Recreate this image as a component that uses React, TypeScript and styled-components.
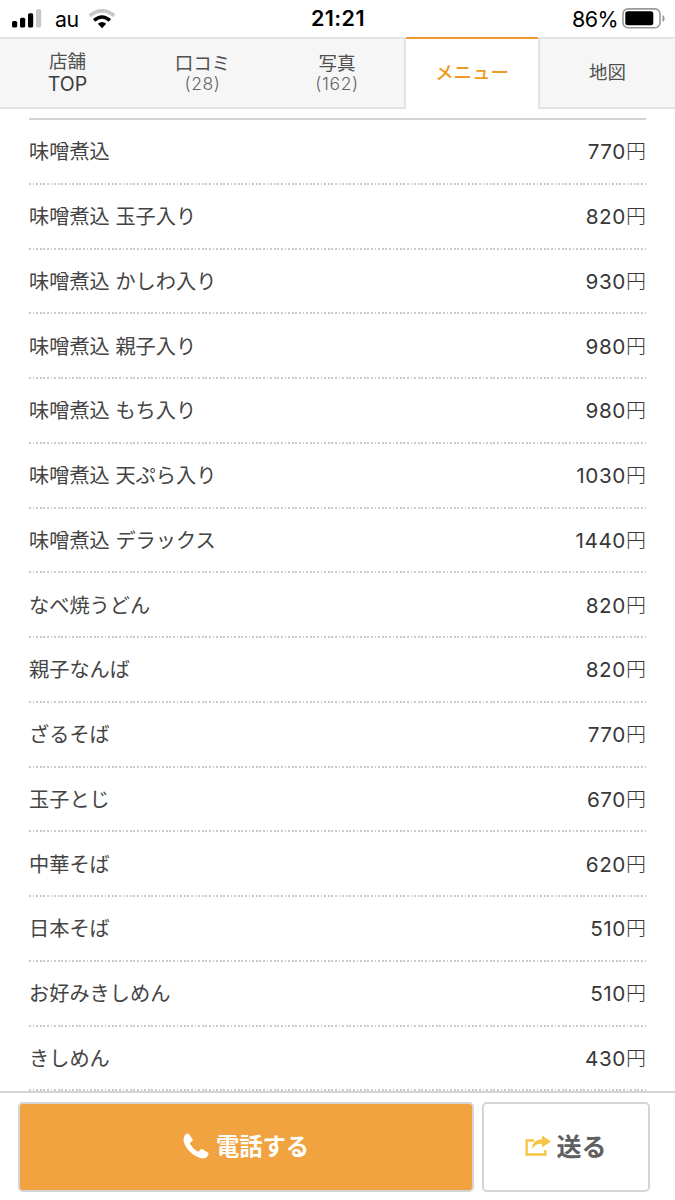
import React from 'react';
import styled, { createGlobalStyle } from 'styled-components';

const GlobalStyle = createGlobalStyle`
  * { box-sizing: border-box; }
  body {
    margin: 0;
    background: #fff;
    color: #444;
    font-family: Inter, "Noto Sans CJK JP", sans-serif;
    font-weight: 400;
  }
`;

const Screen = styled.div`
  width: 675px;
  height: 1200px;
  overflow: hidden;
  display: flex;
  flex-direction: column;
`;

const StatusBar = styled.header`
  height: 37px;
  flex: none;
  display: grid;
  grid-template-columns: 1fr auto 1fr;
  align-items: center;
  padding: 0 10px 0 12px;
  color: #000;
  font-size: 22px;
  font-weight: 400;
  line-height: 34px;
`;

const StatusGroup = styled.div<{ $end?: boolean }>`
  display: flex;
  align-items: center;
  height: 36px;
  justify-content: ${(p) => (p.$end ? 'flex-end' : 'flex-start')};
`;

const Carrier = styled.span`
  margin: 0 9px 0 13px;
  font-size: 21.3px;
  letter-spacing: -0.4px;
`;

const Clock = styled.span`
  font-weight: 600;
  font-size: 21.5px;
  letter-spacing: 0.4px;
  margin-right: 1px;
  padding-bottom: 1px;
`;

const Percent = styled.span`
  margin-right: 4px;
  font-size: 21.5px;
  letter-spacing: -0.6px;
`;

const Tabs = styled.nav`
  flex: none;
  height: 72px;
  display: grid;
  grid-template-columns: 406px 132px 137px;
`;

const TabGroup = styled.div`
  display: grid;
  grid-template-columns: 135px 135px 134px;
  border-right: 2px solid #e4e4e4;
`;

const Tab = styled.div<{ $active?: boolean; $divided?: boolean; $stacked?: boolean }>`
  display: flex;
  flex-direction: column;
  align-items: center;
  justify-content: center;
  padding-bottom: ${(p) => (p.$stacked ? '0' : '2px')};
  font-size: 18.5px;
  line-height: 22px;
  color: ${(p) => (p.$active ? '#f09a26' : '#505050')};
  font-weight: ${(p) => (p.$active ? 500 : 400)};
  background: ${(p) => (p.$active ? '#fff' : '#f6f6f6')};
  border-top: 2px solid ${(p) => (p.$active ? '#eb9a35' : '#e4e4e4')};
  border-bottom: 2px solid ${(p) => (p.$active ? '#fff' : '#e4e4e4')};
  ${(p) => p.$divided && 'border-left: 2px solid #e4e4e4;'}
`;

const TopWord = styled.span`
  font-size: 19.5px;
  line-height: 24px;
  color: #3c3c3c;
`;

const Count = styled.span`
  font-size: 17.5px;
  line-height: 20px;
  letter-spacing: 0.6px;
  font-weight: 350;
  color: #666;
`;

const Menu = styled.ul`
  flex: 1;
  min-height: 0;
  overflow: hidden;
  list-style: none;
  margin: 9px 29px 0;
  padding: 0;
  border-top: 2px solid #d2d2d2;
`;

const MenuRow = styled.li`
  height: 64.76px;
  display: flex;
  justify-content: space-between;
  align-items: center;
  font-size: 20.2px;
  line-height: 30px;
  background: repeating-linear-gradient(90deg, #cacaca 0 1.8px, #fff 1.8px 3.6px)
    0 100% / 100% 2px no-repeat;
`;

const Price = styled.span`
  display: flex;
  font-size: 20.7px;
  letter-spacing: 0.6px;
  color: #383838;
`;

const Yen = styled.span`
  font-size: 20px;
  letter-spacing: 0;
  font-weight: 300;
`;

const ActionBar = styled.footer`
  flex: none;
  height: 109px;
  border-top: 2px solid #d4d4d4;
  padding: 9px 25px 8px 18px;
  display: grid;
  grid-template-columns: 456px 168px;
  column-gap: 8px;
`;

const ActionButton = styled.button<{ $primary?: boolean }>`
  display: flex;
  align-items: center;
  justify-content: center;
  border: 2px solid #d5d5d5;
  border-radius: 5px;
  padding: 0;
  font-family: inherit;
  font-weight: 700;
  font-size: ${(p) => (p.$primary ? '23.3px' : '25px')};
  line-height: 32px;
  color: ${(p) => (p.$primary ? '#fff' : '#606060')};
  background: ${(p) => (p.$primary ? '#f0a33e' : '#fff')};
  gap: ${(p) => (p.$primary ? '7px' : '5px')};

  svg {
    margin-bottom: 3px;
  }
`;

const SignalIcon = () => (
  <svg width="30" height="20" viewBox="0 0 30 20">
    <rect x="0" y="12" width="5.2" height="6.5" rx="1.5" />
    <rect x="8" y="8.7" width="5.2" height="9.8" rx="1.5" />
    <rect x="16" y="4.2" width="5.2" height="14.3" rx="1.5" />
    <rect x="24" y="0.3" width="5.2" height="18.2" rx="1.5" fill="#c8c8c8" />
  </svg>
);

const WifiIcon = () => (
  <svg width="28" height="20" viewBox="0 0 28 20">
    <path d="M1.8 6.7Q14 -3 26.2 6.7" fill="none" stroke="#c8c8c8" strokeWidth="3.8" />
    <path d="M6.1 11.3Q14 4.7 21.9 11.3" fill="none" stroke="#000" strokeWidth="3.6" />
    <path d="M9.8 14.7Q14 11.3 18.2 14.7L14 19.2Z" />
  </svg>
);

const BatteryIcon = () => (
  <svg width="43" height="22" viewBox="0 0 43 22">
    <rect x="1" y="0.9" width="37" height="18.8" rx="5" fill="none" stroke="#999" strokeWidth="1.6" />
    <rect x="3.3" y="3.3" width="28" height="14" rx="2.5" />
    <path d="M40.5 7C43.3 8 43.3 13 40.5 14Z" fill="#999" />
  </svg>
);

const PhoneIcon = () => (
  <svg width="26" height="26" viewBox="0 0 26 26">
    <path
      d="M1.3 3.2C2.1 1.7 3.6 .7 4.8 .6C5.4 .6 5.8 1 6.2 1.6L9.5 6.3C9.9 7 9.7 7.6 9.1 8.1L7.3 9.6C6.9 10 6.9 10.5 7.2 11C8.7 13.8 11.7 16.8 14.8 18.4C15.3 18.7 15.8 18.6 16.2 18.1L17.7 16.5C18.2 15.9 18.8 15.9 19.5 16.3L24.7 19.6C25.4 20.1 25.7 20.5 25.5 21.2C24.9 23.3 22.9 25.4 20.4 25.4C11.9 25.5 .5 14.6 .5 6.3C.5 5.1 .8 4.1 1.3 3.2Z"
      fill="currentColor"
    />
  </svg>
);

const ShareIcon = () => (
  <svg width="26" height="22" viewBox="0 0 26 22">
    <path d="M9 5.5H1.7V19.5H20.3V15" fill="none" stroke="#f8c543" strokeWidth="2.3" />
    <path d="M7 14C7.3 7.6 11 4.4 17 4.2V.5L26 6.5L17 12.5V8.8C12.5 8.7 9.4 10.4 7 14Z" fill="#f8c543" />
  </svg>
);

const items: [string, number][] = [
  ['味噌煮込', 770],
  ['味噌煮込 玉子入り', 820],
  ['味噌煮込 かしわ入り', 930],
  ['味噌煮込 親子入り', 980],
  ['味噌煮込 もち入り', 980],
  ['味噌煮込 天ぷら入り', 1030],
  ['味噌煮込 デラックス', 1440],
  ['なべ焼うどん', 820],
  ['親子なんば', 820],
  ['ざるそば', 770],
  ['玉子とじ', 670],
  ['中華そば', 620],
  ['日本そば', 510],
  ['お好みきしめん', 510],
  ['きしめん', 430],
];

export default function App() {
  return (
    <Screen lang="ja">
      <GlobalStyle />
      <StatusBar>
        <StatusGroup>
          <SignalIcon />
          <Carrier>au</Carrier>
          <WifiIcon />
        </StatusGroup>
        <Clock>21:21</Clock>
        <StatusGroup $end>
          <Percent>86%</Percent>
          <BatteryIcon />
        </StatusGroup>
      </StatusBar>
      <Tabs>
        <TabGroup>
          <Tab $stacked>
            店舗
            <TopWord>TOP</TopWord>
          </Tab>
          <Tab $stacked>
            口コミ
            <Count>(28)</Count>
          </Tab>
          <Tab $stacked>
            写真
            <Count>(162)</Count>
          </Tab>
        </TabGroup>
        <Tab $active>メニュー</Tab>
        <Tab $divided>地図</Tab>
      </Tabs>
      <Menu>
        {items.map(([name, price]) => (
          <MenuRow key={name}>
            <span>{name}</span>
            <Price>
              {price}
              <Yen>円</Yen>
            </Price>
          </MenuRow>
        ))}
      </Menu>
      <ActionBar>
        <ActionButton $primary>
          <PhoneIcon />
          電話する
        </ActionButton>
        <ActionButton>
          <ShareIcon />
          送る
        </ActionButton>
      </ActionBar>
    </Screen>
  );
}
